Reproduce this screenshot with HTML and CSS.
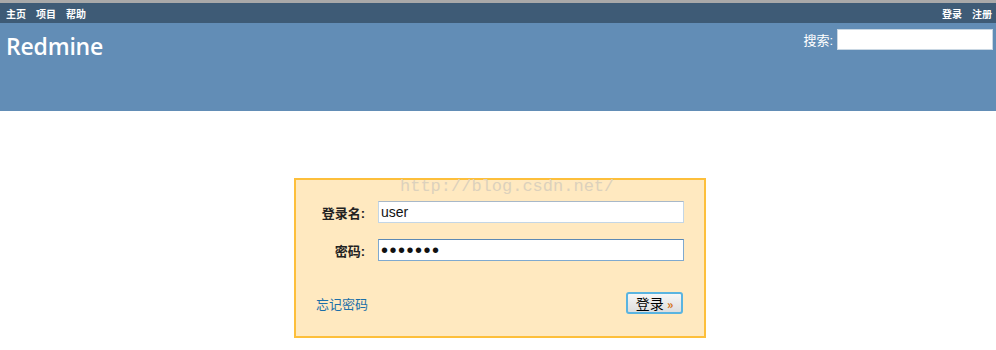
FILE: index.html
```html
<!DOCTYPE html>
<html lang="zh-CN">

<head>
    <meta charset="UTF-8">
    <title>Redmine</title>
    <link rel="stylesheet" href="styles.css">
</head>

<body>
    <div class="top-menu">
        <ul class="menu-left">
            <li><a href="#">主页</a></li>
            <li><a href="#">项目</a></li>
            <li><a href="#">帮助</a></li>
        </ul>
        <ul class="menu-right">
            <li><a href="#">登录</a></li>
            <li><a href="#">注册</a></li>
        </ul>
    </div>

    <div class="header">
        <h1>Redmine</h1>
        <div class="quick-search">
            <label for="q">搜索:</label>
            <input type="text" id="q">
        </div>
    </div>

    <div class="content">
        <div class="login-form">
            <div class="watermark">http://blog.csdn.net/</div>
            <div class="row">
                <label for="username">登录名:</label>
                <input type="text" id="username" value="user">
            </div>
            <div class="row">
                <label for="password">密码:</label>
                <input type="password" id="password" value="1234567">
            </div>
            <div class="actions">
                <a href="#" class="lost-password">忘记密码</a>
                <button class="submit">登录 <span class="arrows">»</span></button>
            </div>
        </div>
    </div>
</body>

</html>
```

FILE: styles.css
```css
/* styles.css */

body {
    margin: 0;
    font-family: "Liberation Sans", "Noto Sans CJK SC", sans-serif;
    font-size: 12px;
    background: #fff;
}

.top-menu {
    display: flex;
    justify-content: space-between;
    align-items: center;
    height: 20px;
    background: #3e5b76;
    border-top: 3px solid #a9a9a9;
    padding: 0 4px 0 6px;
}

.top-menu ul {
    display: flex;
    gap: 10px;
    margin: 0;
    padding: 0;
    list-style: none;
}

.top-menu a {
    color: #fff;
    font-weight: bold;
    font-size: 10px;
    text-decoration: none;
}

.header {
    display: flex;
    justify-content: space-between;
    align-items: flex-start;
    height: 88px;
    background: #628db6;
    padding: 0 3px 0 6px;
}

.header h1 {
    margin: 7px 0 0;
    color: #fff;
    font-family: "Open Sans", "Liberation Sans", sans-serif;
    font-size: 23px;
    font-weight: 600;
    letter-spacing: -0.2px;
}

.quick-search {
    display: flex;
    align-items: center;
    gap: 4px;
    margin-top: 6px;
    color: #fff;
    font-size: 13px;
}

.quick-search input {
    width: 150px;
    height: 19px;
    padding: 0 2px;
    margin: 0;
    border: 1px solid #c9d7e3;
    box-sizing: content-box;
}

.content {
    display: flex;
    justify-content: center;
    padding-top: 67px;
    padding-left: 4px;
}

.login-form {
    width: 408px;
    height: 156px;
    background: #ffe9c0;
    border: 2px solid #fdbf3b;
    box-sizing: content-box;
    display: flex;
    flex-direction: column;
}

.watermark {
    height: 21px;
    padding-left: 104px;
    color: #dcd1bc;
    font-family: "Liberation Mono", monospace;
    font-size: 17px;
    line-height: 14px;
}

.row {
    display: flex;
    align-items: center;
    margin-bottom: 16px;
}

.row label {
    width: 69px;
    text-align: right;
    font-weight: bold;
    font-size: 13px;
    color: #222;
    padding-right: 13px;
}

.row input {
    width: 300px;
    height: 18px;
    padding: 1px 2px;
    border: 1px solid #c3d6e6;
    border-top-color: #a8b8c8;
    font-family: "Liberation Sans", sans-serif;
    font-size: 14px;
    color: #111;
    box-sizing: content-box;
    margin: 0;
}

#password {
    font-size: 20px;
    line-height: 18px;
    letter-spacing: 1.5px;
    border-color: #7fa9cf;
    border-top-color: #5c89b4;
}

.actions {
    display: flex;
    justify-content: space-between;
    align-items: center;
    padding: 15px 21px 0 20px;
}

.lost-password {
    color: #1b6fa8;
    font-size: 13px;
    text-decoration: none;
}

.submit {
    width: 57px;
    height: 22px;
    padding: 0;
    font-family: "Noto Sans CJK SC", sans-serif;
    font-size: 14px;
    color: #000;
    background: linear-gradient(#f6f6f6, #dedede);
    border: 2px solid #5ab4e0;
    border-radius: 3px;
    line-height: 16px;
}

.arrows {
    color: #d36a0c;
    font-weight: bold;
    font-size: 12px;
}
```
